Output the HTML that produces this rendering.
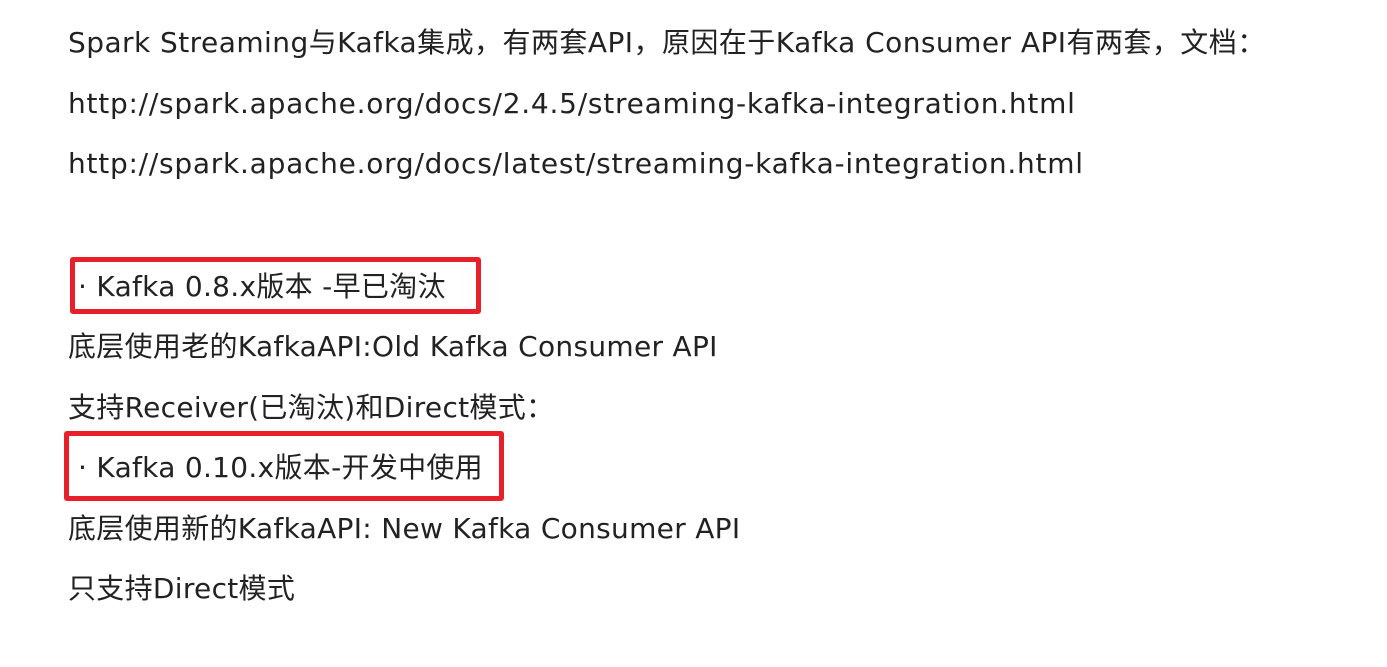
<!DOCTYPE html>
<html><head><meta charset="utf-8"><style>
html,body{margin:0;padding:0;background:#fff;width:1387px;height:667px;overflow:hidden}
.l{position:absolute;left:68px;height:40px;line-height:40px;font-size:28px;letter-spacing:0.3px;color:#222;white-space:nowrap;font-family:"DejaVu Sans","Noto Sans CJK SC",sans-serif}
.u{letter-spacing:0.75px}
.b{position:absolute;border:5px solid #e8202a;border-radius:3px;box-sizing:border-box}
</style></head><body>
<div class="l" style="top:23px;letter-spacing:0.45px">Spark Streaming与Kafka集成，有两套API，原因在于Kafka Consumer API有两套，文档：</div>
<div class="l u" style="top:84px">http://spark.apache.org/docs/2.4.5/streaming-kafka-integration.html</div>
<div class="l u" style="top:144px">http://spark.apache.org/docs/latest/streaming-kafka-integration.html</div>
<div class="b" style="left:70px;top:257px;width:411px;height:57px"></div>
<div class="l" style="top:267px;left:78px">· Kafka 0.8.x版本 -早已淘汰</div>
<div class="l" style="top:327px">底层使用老的KafkaAPI:Old Kafka Consumer API</div>
<div class="l" style="top:388px">支持Receiver(已淘汰)和Direct模式：</div>
<div class="b" style="left:64px;top:431px;width:440px;height:70px"></div>
<div class="l" style="top:448px;left:78px">· Kafka 0.10.x版本-开发中使用</div>
<div class="l" style="top:509px">底层使用新的KafkaAPI: New Kafka Consumer API</div>
<div class="l" style="top:569px">只支持Direct模式</div>
</body></html>
